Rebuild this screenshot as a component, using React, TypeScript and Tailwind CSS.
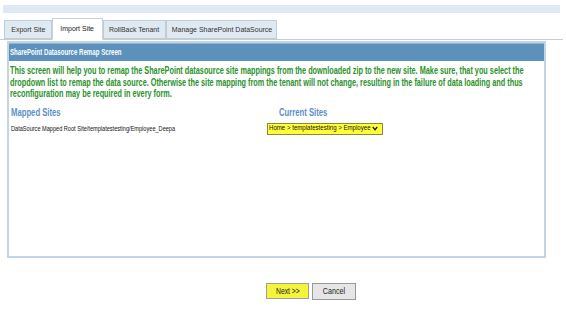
import React from "react";

const LS = { fontFamily: '"Liberation Sans", Arial, sans-serif' };

export default function App() {
  const tabs = [
    { t: "Export Site", w: "w-[48px]" },
    { t: "Import Site", w: "w-[51px]" },
    { t: "RollBack Tenant", w: "w-[63px]" },
    { t: "Manage SharePoint DataSource", w: "w-[111px]" },
  ];
  return (
    <div className="w-[566px] h-[317px] bg-white relative overflow-hidden" style={LS}>
      <div className="pt-[5px] pl-[3px] pr-[6px]">
        <div className="h-[8px] bg-[#dfe9f3]" />
      </div>
      <div className="flex items-end pl-[4px] mr-[3px] mt-[5px] border-b border-[#c8ccd2] h-[22px]">
        {tabs.map((x, i) => (
          <div
            key={x.t}
            className={
              i === 1
                ? `${x.w} h-[22px] bg-white border border-[#c8d2dc] border-b-white -mb-px flex items-center justify-center text-[7.5px] text-[#222]`
                : `${x.w} h-[19px] bg-[#dfe9f2] border border-[#c0ccd8] flex items-center justify-center text-[7.5px] text-[#333]`
            }
          >
            <span className="whitespace-nowrap inline-block scale-x-[0.93]">{x.t}</span>
          </div>
        ))}
      </div>
      <div className="ml-[7px] w-[539px] h-[217px] mt-[1px] border-2 border-[#c3d5e4] bg-white overflow-hidden">
        <div className="h-[18px] bg-[#5b91bb] border-t border-[#8fb3d0] flex items-center pl-[1px] text-white font-bold text-[8.5px]">
          <span className="inline-block whitespace-nowrap origin-left scale-x-[0.72]">SharePoint Datasource Remap Screen</span>
        </div>
        <div className="pl-[1px] mt-[4px] text-[10px] leading-[11.5px] font-bold text-[#2a922a]">
          <div className="whitespace-nowrap origin-left scale-x-[0.73]">
            This screen will help you to remap the SharePoint datasource site mappings from the downloaded zip to the new site. Make sure, that you select the
          </div>
          <div className="whitespace-nowrap origin-left scale-x-[0.73]">
            dropdown list to remap the data source. Otherwise the site mapping from the tenant will not change, resulting in the failure of data loading and thus
          </div>
          <div className="whitespace-nowrap origin-left scale-x-[0.73]">
            reconfiguration may be required in every form.
          </div>
        </div>
        <div className="flex mt-[7px]">
          <div className="w-[258px] pl-[2px]">
            <div className="text-[10px] font-bold text-[#5b8fc6] leading-[12px] whitespace-nowrap origin-left scale-x-[0.77]">Mapped Sites</div>
            <div className="text-[6.5px] text-[#111] mt-[5px] whitespace-nowrap origin-left scale-x-[0.86]">DataSource Mapped Root Site/templatestesting/Employee_Deepa</div>
          </div>
          <div>
            <div className="pl-[12px]">
              <div className="text-[10px] font-bold text-[#5b8fc6] leading-[12px] whitespace-nowrap origin-left scale-x-[0.77]">Current Sites</div>
            </div>
            <div className="mt-[4px] w-[116px] h-[12px] bg-[#ffff3a] border border-[#8a8a30] flex items-center justify-between pl-[1px] pr-[4px] text-[7px] text-[#111] overflow-hidden">
              <span className="w-[98px] shrink-0 whitespace-nowrap origin-left scale-x-[0.87] inline-block">Home &gt; templatestesting &gt; Employee</span>
              <svg width="6" height="5" viewBox="0 0 6 5" className="shrink-0"><path d="M0.8 1 L3 3.8 L5.2 1" fill="none" stroke="#111" strokeWidth="1.3" /></svg>
            </div>
          </div>
        </div>
      </div>
      <div className="flex justify-center gap-[3px] mt-[25px] pl-[56px]">
        <div className="w-[43px] h-[16px] bg-[#f4f43a] border border-[#a0a0a0] flex items-center justify-center text-[8.5px] text-[#222]">
          <span className="whitespace-nowrap inline-block scale-x-[0.8]">Next &gt;&gt;</span>
        </div>
        <div className="w-[44px] h-[17px] bg-[#e6e6e6] border border-[#9a9a9a] flex items-center justify-center text-[9px] text-[#222]">
          <span className="whitespace-nowrap inline-block scale-x-[0.8]">Cancel</span>
        </div>
      </div>
    </div>
  );
}
